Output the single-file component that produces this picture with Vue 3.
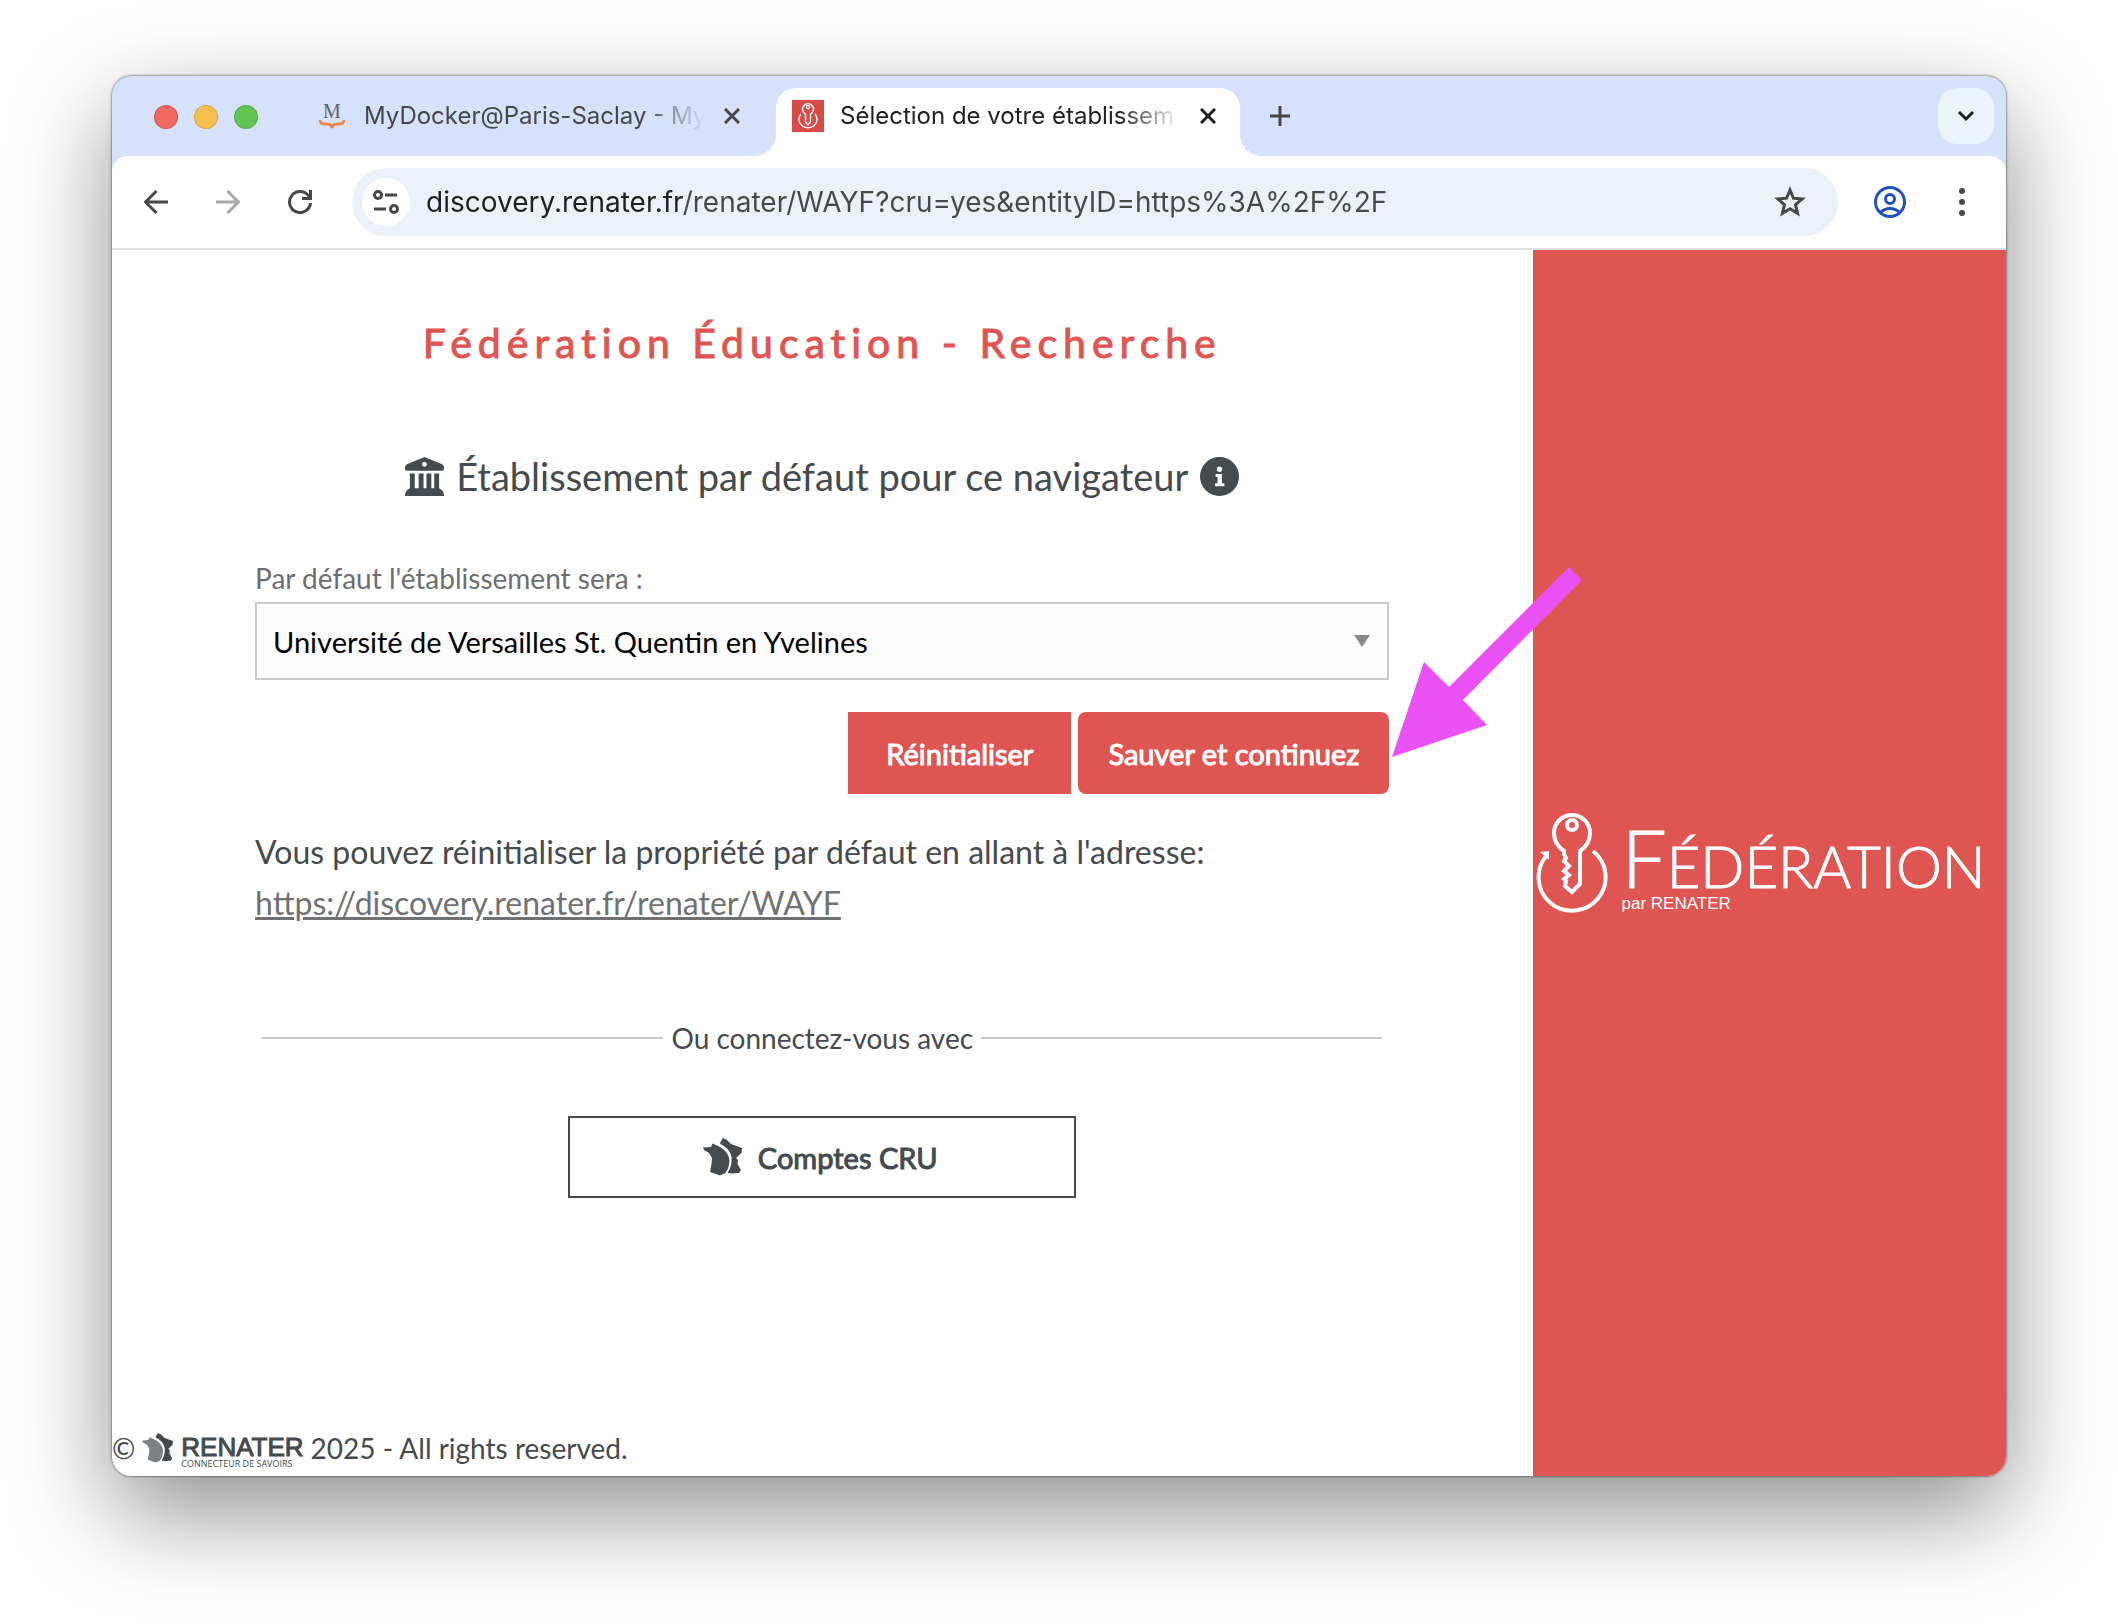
<template>
  <div class="desktop">
    <div class="browser">
      <!-- Tab strip -->
      <header class="tab-strip">
        <div class="traffic-lights">
          <span class="light red"></span>
          <span class="light yellow"></span>
          <span class="light green"></span>
        </div>

        <div
          v-for="tab in tabs"
          :key="tab.id"
          class="tab"
          :class="{ active: tab.id === activeTab }"
          @click="activeTab = tab.id"
        >
          <svg v-if="tab.icon === 'docker'" class="favicon" viewBox="0 0 32 32">
            <text x="16" y="18" text-anchor="middle" font-size="20" font-family="Liberation Serif, serif" fill="#5f6368">M</text>
            <path d="M4 20c0 4 3 4 6 4 3 0 5 0 6 4 1-4 3-4 6-4 3 0 6 0 6-4" fill="none" stroke="#ee8340" stroke-width="2.6" />
          </svg>
          <svg v-else class="favicon" viewBox="0 0 32 32">
            <rect width="32" height="32" fill="#d84a45" />
            <g fill="none" stroke="#fff" stroke-width="1.4">
              <path d="M13.5 14V22l2.5 3 2.5-3V14a5.5 5.5 0 1 0-5 0" />
              <circle cx="16" cy="7" r="1.6" />
              <path d="M9 14a9 8.5 0 1 0 14 0" />
            </g>
          </svg>
          <span class="tab-title">{{ tab.title }}</span>
          <button class="icon-button tab-close" title="Fermer l'onglet">
            <svg width="16" height="16" viewBox="0 0 16 16"><path d="M1 1l14 14M15 1L1 15" /></svg>
          </button>
        </div>

        <button class="icon-button new-tab" title="Nouvel onglet">
          <svg width="20" height="20" viewBox="0 0 20 20"><path d="M10 0v20M0 10h20" /></svg>
        </button>
        <button class="icon-button tab-search" title="Rechercher dans les onglets">
          <svg width="18" height="12" viewBox="0 0 18 12"><path d="M2 2l7 7 7-7" /></svg>
        </button>
      </header>

      <!-- Toolbar -->
      <nav class="toolbar">
        <button class="icon-button" title="Retour">
          <svg width="24" height="24" viewBox="0 0 24 24"><path d="M24 12H2M12.500 1L1.500 12l11 11" /></svg>
        </button>
        <button class="icon-button" title="Avancer" disabled>
          <svg width="24" height="24" viewBox="0 0 24 24"><path d="M0 12h22M11.500 1l11 11-11 11" /></svg>
        </button>
        <button class="icon-button" title="Actualiser">
          <svg width="24" height="24" viewBox="0 0 24 24"><path d="M21 6.500A10.500 10.500 0 1 0 22.500 13M22.500 0v8.500H14" /></svg>
        </button>

        <div class="address-bar">
          <button class="icon-button site-info" title="Informations sur le site">
            <svg width="26" height="24" viewBox="0 0 26 24">
              <circle cx="5" cy="5" r="3.500" />
              <path d="M12 5h12M1 19h12" />
              <circle cx="21" cy="19" r="3.500" />
            </svg>
          </button>
          <input v-model="url" class="url" type="text" aria-label="Adresse" spellcheck="false" />
          <button class="icon-button star" title="Ajouter aux favoris">
            <svg width="32" height="32" viewBox="0 0 32 32">
              <path d="M16 4l3.400 8.200 8.800.7-6.700 5.800 2.100 8.700-7.600-4.700-7.600 4.700 2.100-8.700-6.700-5.800 8.800-.7z" />
            </svg>
          </button>
        </div>

        <button class="icon-button profile" title="Profil">
          <svg width="32" height="32" viewBox="0 0 32 32">
            <circle cx="16" cy="16" r="14.500" />
            <circle cx="16" cy="13" r="4.500" />
            <path d="M6.500 26.500c5-5.500 14-5.500 19 0" />
          </svg>
        </button>
        <button class="icon-button menu" title="Menu">
          <svg width="8" height="28" viewBox="0 0 8 28">
            <circle cx="4" cy="3" r="3" />
            <circle cx="4" cy="14" r="3" />
            <circle cx="4" cy="25" r="3" />
          </svg>
        </button>
      </nav>

      <!-- Page -->
      <div class="page">
        <main class="content">
          <h1>Fédération Éducation - Recherche</h1>

          <h2>
            <svg class="heading-icon" viewBox="0 0 40 40">
              <path d="M20 0l18 7.500q2 1 2 3V12q0 2-2 2H2q-2 0-2-2v-1.500q0-2 2-3zM20 5a2.500 2.500 0 1 0 0 5 2.500 2.500 0 0 0 0-5z" fill-rule="evenodd" />
              <path d="M5 17h5v15h4V17h5v15h3V17h5v15h3V17h5v15l3 2q2 2 2 6H0q0-4 2-6l3-2z" />
            </svg>
            <span>Établissement par défaut pour ce navigateur</span>
            <svg class="heading-icon" viewBox="0 0 40 40">
              <circle cx="20" cy="20" r="20" />
              <circle cx="20" cy="12.500" r="2.800" fill="#fff" />
              <path d="M16 17.500h6.500V27H25v3H15.500v-3H18v-6.500h-2z" fill="#fff" />
            </svg>
          </h2>

          <form class="selection" @submit.prevent>
            <label for="idp">Par défaut l'établissement sera :</label>
            <div class="select-box">
              <select id="idp" v-model="establishment">
                <option v-for="name in establishments" :key="name">{{ name }}</option>
              </select>
            </div>
            <div class="actions">
              <button type="reset" class="button reset">Réinitialiser</button>
              <button type="submit" class="button submit">Sauver et continuez</button>
              <svg class="pointer" width="190" height="190" viewBox="0 0 190 190">
                <path d="M0 190L32 95l25 25L177 0l13 13L71 133l24 25z" />
              </svg>
            </div>
          </form>

          <p class="hint">
            Vous pouvez réinitialiser la propriété par défaut en allant à l'adresse:<br />
            <a href="#">https://discovery.renater.fr/renater/WAYF</a>
          </p>

          <div class="separator"><span>Ou connectez-vous avec</span></div>

          <button class="cru">
            <svg width="40" height="38" viewBox="0 0 40 38">
              <path :d="franceWest" />
              <path :d="franceEast" />
            </svg>
            Comptes CRU
          </button>

          <footer class="footer">
            <span>©</span>
            <svg class="footer-map" width="32" height="30" viewBox="0 0 40 38">
              <path :d="franceWest" fill="#7d8184" />
              <path :d="franceEast" />
            </svg>
            <span class="renater">
              <span class="renater-name">RENATER</span>
              <span class="renater-tagline">CONNECTEUR DE SAVOIRS</span>
            </span>
            <span>2025 - All rights reserved.</span>
          </footer>
        </main>

        <aside class="banner">
          <svg class="key" width="72" height="100" viewBox="0 0 72 100">
            <path d="M29 73l1-5-2-2 5-4-5-4 5-5-5-5 2-3-2-4V38C22 34 18 28 18 20a18 18 0 1 1 36 0c0 8-4 14-10 18v33l-8 8z" />
            <circle cx="36" cy="12" r="5" />
            <path d="M57 38a33.500 33.500 0 1 1-46 4" />
            <path class="tip" d="M4 39l9-1v9z" />
          </svg>
          <div class="wordmark">
            <span class="federation"><span class="initial">F</span>ÉDÉRATION</span>
            <span class="by">par RENATER</span>
          </div>
        </aside>
      </div>
    </div>
  </div>
</template>

<script setup>
import { ref } from 'vue'

const tabs = [
  { id: 1, icon: 'docker', title: 'MyDocker@Paris-Saclay - My' },
  { id: 2, icon: 'key', title: 'Sélection de votre établissem' }
]
const activeTab = ref(2)

const url = ref('discovery.renater.fr/renater/WAYF?cru=yes&entityID=https%3A%2F%2F')

const establishments = ['Université de Versailles St. Quentin en Yvelines']
const establishment = ref(establishments[0])

// Map of France, cut in two halves
const franceWest = 'M0 9.500L8 9l1.500-3.500L15 8C23 12 26.500 17 26.500 24q-.5 6-4 11L17 37.500 7 34 8.500 26 9 20 6 15 1 12z'
const franceEast = 'M17.500 4L20 0l4 2 4 4 11 4-.5 5-5.500 5 2 2-.5 4 3.500 6-2 3-6 .5-5.500-.5C28 30 29 24 28.500 19 27.500 13 23 8.500 17 6z'
</script>

<style>
body {
  background: #fff;
}
</style>

<style scoped>
* {
  box-sizing: border-box;
}

.desktop {
  min-height: 100vh;
  padding: 76px 112px 148px;
  display: flex;
}

.browser {
  flex: 1;
  min-width: 0;
  display: flex;
  flex-direction: column;
  background: #d6e1fb;
  border-radius: 20px;
  overflow: hidden;
  box-shadow: 0 0 2px 1px rgba(0, 0, 0, 0.35), 0 36px 100px rgba(0, 0, 0, 0.45);
  font-family: Lato, sans-serif;
  color: #444a4e;
}

button {
  font-family: inherit;
  cursor: pointer;
}

.icon-button {
  border: none;
  background: none;
  padding: 0;
  display: flex;
  align-items: center;
  justify-content: center;
  flex-shrink: 0;
}

.icon-button svg {
  fill: none;
  stroke: #474747;
  stroke-width: 3;
}

.icon-button:disabled svg {
  stroke: #a8a8a8;
}

/* Tab strip */
.tab-strip {
  display: flex;
  align-items: flex-end;
  height: 80px;
  padding-right: 12px;
  font-family: Inter, sans-serif;
}

.traffic-lights {
  display: flex;
  gap: 16px;
  padding: 0 42px;
  height: 78px;
  align-items: center;
}

.light {
  width: 24px;
  height: 24px;
  border-radius: 50%;
  border: 1px solid rgba(0, 0, 0, 0.12);
}

.light.red {
  background: #ec6a5e;
}

.light.yellow {
  background: #f4bf4f;
}

.light.green {
  background: #61c554;
}

.tab {
  position: relative;
  display: flex;
  align-items: center;
  width: 464px;
  height: 68px;
  padding: 0 20px 12px 16px;
  border-radius: 20px 20px 0 0;
  color: #474747;
}

.tab + .tab {
  margin-left: 12px;
}

.tab.active {
  background: #fff;
  color: #1f1f1f;
}

/* Outward curves at the foot of the active tab */
.tab.active::before,
.tab.active::after {
  content: '';
  position: absolute;
  bottom: 0;
  width: 22px;
  height: 22px;
}

.tab.active::before {
  right: 100%;
  background: radial-gradient(circle at 0 0, transparent 22px, #fff 22px);
}

.tab.active::after {
  left: 100%;
  background: radial-gradient(circle at 100% 0, transparent 22px, #fff 22px);
}

.favicon {
  width: 32px;
  height: 32px;
  flex-shrink: 0;
}

.tab-title {
  flex: 1;
  margin: 0 12px 0 16px;
  font-size: 24px;
  line-height: 32px;
  white-space: nowrap;
  overflow: hidden;
  mask-image: linear-gradient(to right, #000 calc(100% - 64px), transparent calc(100% - 4px));
}

.tab-close {
  width: 24px;
  height: 24px;
}

.active .tab-close svg {
  stroke: #1f1f1f;
}

.new-tab {
  width: 40px;
  height: 40px;
  margin: 0 auto 20px 20px;
}

.tab-search {
  width: 56px;
  height: 56px;
  margin-bottom: 12px;
  border-radius: 20px;
  background: #ecf3fd;
}

.tab-search svg {
  stroke: #1f1f1f;
}

/* Toolbar */
.toolbar {
  display: flex;
  align-items: center;
  gap: 24px;
  padding: 12px 20px;
  background: #fff;
  border-bottom: 2px solid #dfe1e1;
  border-radius: 16px 16px 0 0;
}

.toolbar > .icon-button {
  width: 48px;
  height: 48px;
}

.address-bar {
  flex: 1;
  display: flex;
  align-items: center;
  gap: 16px;
  height: 68px;
  margin: 0 4px;
  padding: 0 32px 0 10px;
  border-radius: 34px;
  background: #ecf1f9;
}

.site-info {
  width: 48px;
  height: 48px;
  border-radius: 50%;
  background: #fff;
}

.url {
  flex: 1;
  min-width: 0;
  height: 48px;
  padding: 0;
  border: none;
  outline: none;
  font-family: Inter, sans-serif;
  font-size: 28px;
  color: transparent;
  caret-color: #1f1f1f;
  /* The host reads darker than the path */
  background: linear-gradient(to right, #1f1f1f 258px, #474747 258px);
  background-clip: text;
}

.profile svg {
  stroke: #1f4fc4;
}

.menu svg {
  fill: #474747;
  stroke: none;
}

/* Page */
.page {
  flex: 1;
  display: grid;
  grid-template-columns: 3fr 1fr;
  background: #fff;
}

.content {
  display: flex;
  flex-direction: column;
  align-items: center;
  min-width: 0;
}

h1 {
  margin: 68px 0 0;
  font-size: 41px;
  line-height: 50px;
  font-weight: 400;
  letter-spacing: 6px;
  color: #df5552;
  -webkit-text-stroke: 1px currentColor;
}

h2 {
  display: flex;
  align-items: center;
  gap: 12px;
  margin: 84px 0 0;
  font-size: 38px;
  line-height: 48px;
  font-weight: 400;
}

svg {
  fill: #444a4e;
}

.heading-icon {
  width: 39px;
  height: 39px;
}

.selection,
.hint,
.separator {
  width: calc(80% - 2px);
}

.selection {
  margin-top: 60px;
  display: flex;
  flex-direction: column;
}

label {
  font-size: 28px;
  line-height: 36px;
  padding-bottom: 6px;
  color: #6c6e70;
}

.select-box {
  position: relative;
}

.select-box::after {
  content: '';
  position: absolute;
  right: 19px;
  top: 33px;
  border: 8px solid transparent;
  border-top: 12px solid #888;
  border-bottom: none;
  pointer-events: none;
}

select {
  appearance: none;
  width: 100%;
  height: 78px;
  padding: 0 48px 0 16px;
  border: 2px solid #c8c8c8;
  border-radius: 0;
  background: #fdfdfd;
  font-family: inherit;
  font-size: 29px;
  color: #000;
}

.actions {
  position: relative;
  display: flex;
  justify-content: flex-end;
  gap: 7px;
  margin-top: 32px;
}

.button,
.cru {
  height: 82px;
  font-size: 29px;
  -webkit-text-stroke: 1px currentColor;
}

.button {
  border: none;
  background: #df5552;
  color: #fff;
}

.reset {
  padding: 0 38px;
}

.submit {
  padding: 0 30px;
  border-radius: 8px;
}

.pointer {
  position: absolute;
  left: 100%;
  bottom: 37px;
  margin-left: 3px;
  z-index: 1;
  fill: #ec51f8;
  pointer-events: none;
}

.hint {
  margin: 32px 0 0;
  font-size: 32px;
  line-height: 51px;
}

.hint a {
  color: #6f7173;
}

.separator {
  display: flex;
  align-items: center;
  gap: 8px;
  margin-top: 90px;
  padding: 0 7px;
  font-size: 28px;
  line-height: 40px;
}

.separator::before,
.separator::after {
  content: '';
  flex: 1;
  height: 2px;
  background: #c8c8c8;
}

.cru {
  display: flex;
  align-items: center;
  justify-content: center;
  gap: 15px;
  width: 508px;
  margin-top: 58px;
  padding: 0 8px 0 4px;
  border: 2px solid #444a4e;
  background: #fff;
  color: #444a4e;
}

.footer {
  align-self: stretch;
  display: flex;
  align-items: center;
  gap: 7px;
  margin-top: auto;
  padding-bottom: 5px;
  font-size: 28px;
  line-height: 44px;
}

.renater {
  display: flex;
  flex-direction: column;
  padding-top: 12px;
}

.renater-name {
  font-family: "Liberation Sans", sans-serif;
  font-size: 26px;
  line-height: 20px;
  -webkit-text-stroke: 1px currentColor;
}

.renater-tagline {
  font-family: "Open Sans", sans-serif;
  font-size: 9px;
  line-height: 14px;
}

/* Right-hand banner */
.banner {
  display: flex;
  align-items: center;
  gap: 14px;
  padding-left: 3px;
  background: #df5552;
  color: #fff;
}

.key {
  flex-shrink: 0;
  fill: none;
  stroke: #fff;
  stroke-width: 4;
}

.key .tip {
  fill: #fff;
  stroke: none;
}

.wordmark {
  display: flex;
  flex-direction: column;
  padding-top: 8px;
}

.federation {
  font-size: 58px;
  line-height: 72px;
  font-weight: 300;
  white-space: nowrap;
  -webkit-text-stroke: 1px currentColor;
}

.initial {
  font-size: 80px;
}

.by {
  margin-top: -8px;
  font-family: "Liberation Sans", sans-serif;
  font-size: 17px;
  line-height: 20px;
}
</style>
